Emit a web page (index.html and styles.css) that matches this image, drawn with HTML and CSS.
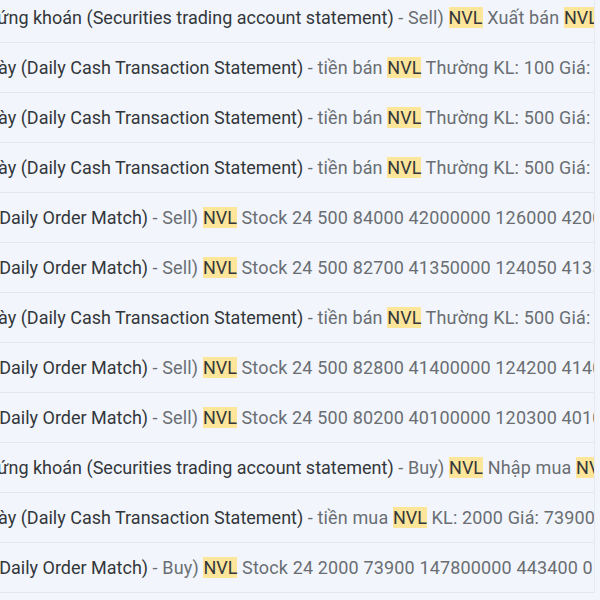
FILE: index.html
```html
<!DOCTYPE html>
<html lang="vi">
<head>
  <meta charset="UTF-8">
  <title>Hộp thư - NVL</title>
  <link rel="stylesheet" href="styles.css">
</head>
<body>
<main class="list">
  <div class="row row-sec">
    <span class="subject">chứng khoán (Securities trading account statement)</span>
    <span class="snippet">- Sell) <mark class="hl">NVL</mark> Xuất bán <mark class="hl">NVL</mark> 500 84000 42000000</span>
  </div>
  <div class="row row-cash">
    <span class="subject">ngày (Daily Cash Transaction Statement)</span>
    <span class="snippet">- tiền bán <mark class="hl">NVL</mark> Thường KL: 100 Giá: 84000 Phí: 25200</span>
  </div>
  <div class="row row-cash">
    <span class="subject">ngày (Daily Cash Transaction Statement)</span>
    <span class="snippet">- tiền bán <mark class="hl">NVL</mark> Thường KL: 500 Giá: 84000 Phí: 126000</span>
  </div>
  <div class="row row-cash">
    <span class="subject">ngày (Daily Cash Transaction Statement)</span>
    <span class="snippet">- tiền bán <mark class="hl">NVL</mark> Thường KL: 500 Giá: 82700 Phí: 124050</span>
  </div>
  <div class="row row-order">
    <span class="subject">(Daily Order Match)</span>
    <span class="snippet">- Sell) <mark class="hl">NVL</mark> Stock 24 500 84000 42000000 126000 42000000</span>
  </div>
  <div class="row row-order">
    <span class="subject">(Daily Order Match)</span>
    <span class="snippet">- Sell) <mark class="hl">NVL</mark> Stock 24 500 82700 41350000 124050 41350000</span>
  </div>
  <div class="row row-cash">
    <span class="subject">ngày (Daily Cash Transaction Statement)</span>
    <span class="snippet">- tiền bán <mark class="hl">NVL</mark> Thường KL: 500 Giá: 82800 Phí: 124200</span>
  </div>
  <div class="row row-order">
    <span class="subject">(Daily Order Match)</span>
    <span class="snippet">- Sell) <mark class="hl">NVL</mark> Stock 24 500 82800 41400000 124200 41400000</span>
  </div>
  <div class="row row-order">
    <span class="subject">(Daily Order Match)</span>
    <span class="snippet">- Sell) <mark class="hl">NVL</mark> Stock 24 500 80200 40100000 120300 40100000</span>
  </div>
  <div class="row row-sec">
    <span class="subject">chứng khoán (Securities trading account statement)</span>
    <span class="snippet">- Buy) <mark class="hl">NVL</mark> Nhập mua <mark class="hl">NVL</mark> 2000 73900 147800000</span>
  </div>
  <div class="row row-cash">
    <span class="subject">ngày (Daily Cash Transaction Statement)</span>
    <span class="snippet">- tiền mua <mark class="hl">NVL</mark> KL: 2000 Giá: 73900 Phí: 443400</span>
  </div>
  <div class="row row-order">
    <span class="subject">(Daily Order Match)</span>
    <span class="snippet">- Buy) <mark class="hl">NVL</mark> Stock 24 2000 73900 147800000 443400 0</span>
  </div>
</main>
</body>
</html>
```

FILE: styles.css
```css
* {
  margin: 0;
  padding: 0;
  box-sizing: border-box;
}

body {
  background: #f2f6fc;
  font-family: Roboto, "Noto Sans", sans-serif;
  font-size: 18px;
  overflow: hidden;
}

.list {
  margin-top: -7px;
  width: 595px;
  border-right: 1px solid #e6eaf0;
}

.row {
  height: 50px;
  line-height: 49px;
  white-space: nowrap;
  overflow: hidden;
  border-bottom: 1px solid #e3e7ee;
}

.subject {
  color: #33373b;
}

.snippet {
  color: #6a6e73;
  letter-spacing: 0.15px;
}

.hl {
  background: #fde59a;
  color: #33373b;
  letter-spacing: 0;
}

.row-sec .subject {
  margin-left: -22px;
}

.row-cash .subject {
  margin-left: -22px;
}

.row-order .subject {
  margin-left: -7px;
}
```
